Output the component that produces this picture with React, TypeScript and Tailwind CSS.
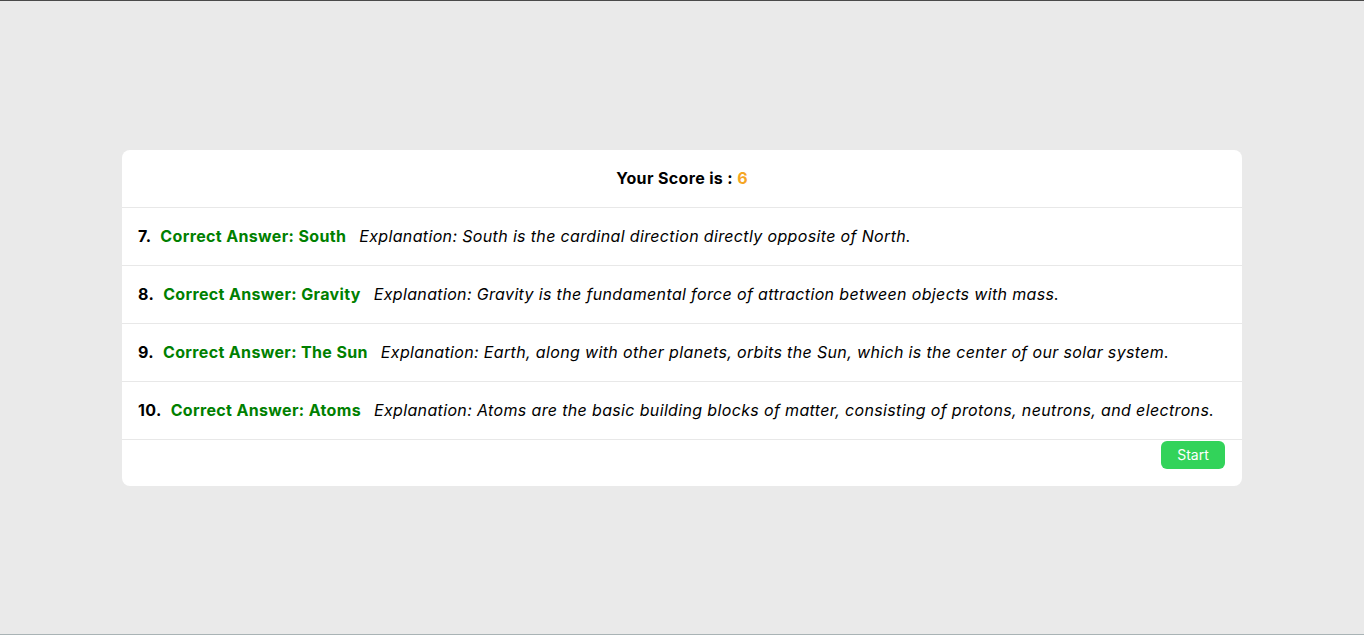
import React from 'react';

type Result = {
    num: number;
    answer: string;
    explanation: string;
};

const results: Result[] = [
    { num: 7, answer: 'South', explanation: 'South is the cardinal direction directly opposite of North.' },
    { num: 8, answer: 'Gravity', explanation: 'Gravity is the fundamental force of attraction between objects with mass.' },
    { num: 9, answer: 'The Sun', explanation: 'Earth, along with other planets, orbits the Sun, which is the center of our solar system.' },
    { num: 10, answer: 'Atoms', explanation: 'Atoms are the basic building blocks of matter, consisting of protons, neutrons, and electrons.' },
];

export default function App() {
    return (
        <div
            className="min-h-screen h-[635px] bg-[#eaeaea] border-t border-t-[#4a4a4a] border-b border-b-[#a9b3b5] flex items-center justify-center tracking-[0.35px]"
            style={{ fontFamily: 'Inter, "Open Sans", sans-serif' }}
        >
            <div className="w-[1120px] bg-white rounded-lg">
                <div className="h-[58px] flex items-center justify-center border-b border-[#e8e8e8] text-[16px] font-bold text-black">
                    Your Score is :&nbsp;<span className="text-[#f5a623]">6</span>
                </div>
                {results.map((r) => (
                    <div key={r.num} className="h-[58px] flex items-center px-4 border-b border-[#e8e8e8] text-[16px] text-black">
                        <span className="font-bold">{r.num}.</span>
                        <span className="font-bold text-[#008000] ml-[9px]">Correct Answer: {r.answer}</span>
                        <span className="italic ml-[13px]">Explanation: {r.explanation}</span>
                    </div>
                ))}
                <div className="h-[46px] flex justify-end items-start pt-[1px] pr-[17px]">
                    <button className="w-[64px] h-[28px] rounded-md bg-[#32d35a] text-white text-[14px] tracking-normal">
                        Start
                    </button>
                </div>
            </div>
        </div>
    );
}
